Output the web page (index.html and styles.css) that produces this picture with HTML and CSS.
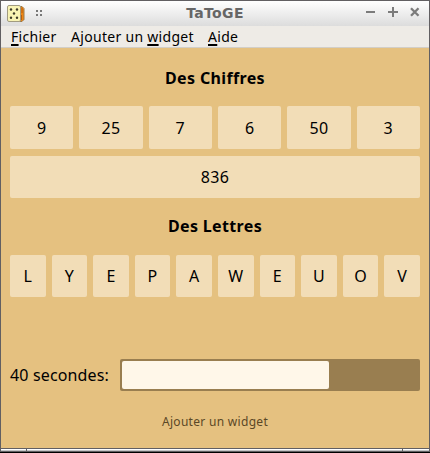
FILE: index.html
```html
<!DOCTYPE html>
<html lang="fr">
<head>
<meta charset="utf-8">
<title>TaToGE</title>
<link rel="stylesheet" href="styles.css">
</head>
<body>
<div class="window">
  <header class="titlebar">
    <svg class="app-icon" width="18" height="18" viewBox="0 0 18 18">
      <path d="M12.5 1.5H15L17 3.5V14.5L15 16.5H12.5Z" fill="#ed8614" stroke="#9a7a4c"/>
      <path d="M15 2.5V8M14.5 10V15" stroke="#b85c0c"/>
      <rect x=".5" y=".5" width="13" height="16" rx="1.5" fill="#f8f3b4" stroke="#a19b80"/>
      <g fill="#3c3a28"><circle cx="4" cy="4.5" r="1.2"/><circle cx="10" cy="4.5" r="1.2"/><circle cx="7" cy="8.5" r="1.2"/><circle cx="4" cy="12.7" r="1.2"/><circle cx="10" cy="12.7" r="1.2"/></g>
    </svg>
    <svg class="grip" width="7" height="6" viewBox="0 0 7 6" fill="#777"><path d="M0 0h2v2H0zM4 0h2v2H4zM0 4h2v2H0zM4 4h2v2H4z"/></svg>
    <h1 class="title">TaToGE</h1>
    <svg class="controls" width="54" height="10" viewBox="0 0 54 10" fill="#7b7b7b">
      <path d="M0 4h9v2H0zM22 4h10v2H22zM26 0h2v10H26z"/>
      <path d="M45 1.2L52.5 8.8M52.5 1.2L45 8.8" stroke="#7b7b7b" stroke-width="2.3"/>
    </svg>
  </header>
  <nav class="menubar">
    <span class="menu m1"><u>F</u>ichier</span>
    <span class="menu m2">Ajouter un <u>w</u>idget</span>
    <span class="menu m3"><u>A</u>ide</span>
  </nav>
  <main class="content">
    <h2 class="heading">Des Chiffres</h2>
    <div class="numbers"><div class="tile">9</div><div class="tile">25</div><div class="tile">7</div><div class="tile">6</div><div class="tile">50</div><div class="tile">3</div></div>
    <div class="tile total">836</div>
    <h2 class="heading letters-heading">Des Lettres</h2>
    <div class="letters"><div class="tile">L</div><div class="tile">Y</div><div class="tile">E</div><div class="tile">P</div><div class="tile">A</div><div class="tile">W</div><div class="tile">E</div><div class="tile">U</div><div class="tile">O</div><div class="tile">V</div></div>
    <div class="timer"><span class="time">40 secondes:</span><div class="progress"><div class="bar"></div></div></div>
    <div class="add"><span>Ajouter un widget</span></div>
  </main>
</div>
<footer class="frame-bottom"><i></i><i></i><i></i></footer>
</body>
</html>
```
FILE: styles.css
```css
* { box-sizing: border-box; }
body { margin: 0; width: 430px; height: 453px; overflow: hidden; background: #000; font-family: "Noto Sans", sans-serif; color: #000; }
.window { height: 448px; border: 1px solid #615f62; border-bottom: 0; background: #e5c180; }
.titlebar { height: 25px; display: flex; align-items: center; background: linear-gradient(#fff, #dcdcdc); }
.app-icon { margin-left: 6px; }
.grip { margin: 0 0 1px 11px; }
.title { flex: 1; margin: 0; padding: 0 0 0 21px; text-align: center; font: bold 14px/23px "DejaVu Sans", sans-serif; letter-spacing: .35px; color: #666; }
.controls { margin: 0 9px 3px 0; }
.menubar { height: 22px; display: flex; padding-left: 10px; background: #eeebe6; border-bottom: 1px solid #d2cec7; font-size: 14px; line-height: 21px; letter-spacing: .3px; white-space: nowrap; }
.menubar u { text-decoration-thickness: 1.5px; text-underline-offset: 2px; text-decoration-skip-ink: none; }
.m1 { width: 60px; }
.m2 { width: 137px; }
.content { padding: 0 9px; }
.heading { margin: 0; height: 58px; font-size: 16px; line-height: 60px; text-align: center; font-weight: 700; letter-spacing: .35px; }
.letters-heading { height: 57px; line-height: 56px; }
.numbers { display: grid; grid-template-columns: repeat(6, 1fr); gap: 6px; height: 43px; }
.letters { display: grid; grid-template-columns: repeat(10, 1fr); gap: 6px; height: 42px; }
.tile { display: flex; align-items: center; justify-content: center; background: #f2ddb7; border-radius: 2px; font-size: 16px; letter-spacing: .3px; }
.total { height: 42px; margin-top: 7px; }
.timer { display: flex; align-items: center; height: 32px; margin-top: 62px; }
.time { width: 110px; font-size: 16px; letter-spacing: .15px; white-space: nowrap; }
.progress { flex: 1; height: 32px; padding: 2px; border-radius: 2px; background: #997e50; }
.bar { width: 207px; height: 28px; background: #fff7e9; border-radius: 2px; }
.add { text-align: center; font-size: 12px; line-height: 18px; letter-spacing: .3px; margin-top: 22px; color: #5b4826; }
.frame-bottom { display: grid; grid-template-columns: 25px 1fr 26px; gap: 1px; height: 5px; padding: 1px; background: #615f62; border-bottom: 1px solid #000; }
.frame-bottom i { background: linear-gradient(#fff 50%, #c4c4c6 50%); }
```
